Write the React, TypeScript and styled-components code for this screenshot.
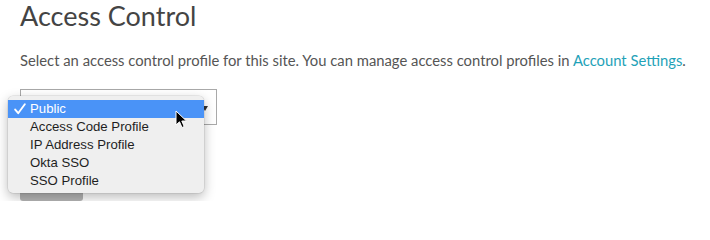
import React from "react";
import styled, { createGlobalStyle } from "styled-components";

const Global = createGlobalStyle`
  html, body { margin: 0; padding: 0; background: #fff; }
  body { font-family: Lato, "Open Sans", sans-serif; }
`;

const Page = styled.div`
  display: flex;
  flex-direction: column;
  padding: 0 20px;
  width: 710px;
  box-sizing: border-box;
`;

const Title = styled.h2`
  margin: 0;
  font-family: Lato, sans-serif;
  font-weight: 400;
  font-size: 27px;
  line-height: 32px;
  color: #444;
`;

const Intro = styled.p`
  margin: 18px 0 0;
  font-family: Lato, sans-serif;
  font-size: 14.8px;
  line-height: 20px;
  color: #555;
  white-space: nowrap;
`;

const Link = styled.a`
  color: #1fa2b8;
  text-decoration: none;
`;

const Field = styled.div`
  position: relative;
  display: flex;
  flex-direction: column;
  gap: 40px;
  margin-top: 19px;
  width: 197px;
`;

const SelectBox = styled.div`
  box-sizing: border-box;
  width: 197px;
  height: 36px;
  border: 1px solid #a9a9a9;
  background: #fff;
  display: flex;
  align-items: center;
  justify-content: flex-end;
  padding-right: 8px;
`;

const Caret = styled.span`
  width: 0;
  height: 0;
  border-left: 3px solid transparent;
  border-right: 3px solid transparent;
  border-top: 5px solid #333;
  margin-top: 2px;
`;

const SaveButton = styled.div`
  width: 63px;
  height: 36px;
  border-radius: 3px;
  background: #b5b5b5;
`;

const Menu = styled.ul`
  position: absolute;
  left: -12px;
  top: 7px;
  width: 196px;
  box-sizing: border-box;
  margin: 0;
  padding: 4px 0 3px;
  list-style: none;
  background: #efefef;
  border-radius: 5px;
  box-shadow: 0 0 0 0.5px rgba(0, 0, 0, 0.12), 0 4px 12px rgba(0, 0, 0, 0.28);
  font-family: "Liberation Sans", Arial, sans-serif;
  font-size: 13.2px;
`;

const Option = styled.li<{ $active?: boolean }>`
  position: relative;
  display: flex;
  align-items: center;
  height: 18px;
  line-height: 18px;
  padding-left: 22px;
  color: ${(p) => (p.$active ? "#fff" : "#1e1e1e")};
  background: ${(p) => (p.$active ? "#4a93f7" : "transparent")};
`;

const Check = styled.svg`
  position: absolute;
  left: 6px;
  top: 3px;
`;

const Pointer = styled.svg`
  position: absolute;
  left: 155px;
  top: 21px;
`;

const options = [
  "Public",
  "Access Code Profile",
  "IP Address Profile",
  "Okta SSO",
  "SSO Profile",
];

export default function App() {
  return (
    <Page>
      <Global />
      <Title>Access Control</Title>
      <Intro>
        Select an access control profile for this site. You can manage access
        control profiles in <Link href="#">Account Settings</Link>.
      </Intro>
      <Field>
        <SelectBox>
          <Caret />
        </SelectBox>
        <SaveButton />
        <Menu>
          {options.map((o, i) => (
            <Option key={o} $active={i === 0}>
              {i === 0 && (
                <Check width="12" height="12" viewBox="0 0 12 12">
                  <path
                    d="M1.2 6.6 L4.2 10.2 L10.8 1.2"
                    fill="none"
                    stroke="#fff"
                    strokeWidth="1.9"
                    strokeLinecap="round"
                    strokeLinejoin="round"
                  />
                </Check>
              )}
              {o}
            </Option>
          ))}
        </Menu>
        <Pointer width="13" height="19" viewBox="0 0 13 19">
          <path
            d="M1 1 L1 15 L4.5 11.8 L7 17.5 L9.2 16.5 L6.8 11 L11.5 11 Z"
            fill="#000"
            stroke="#fff"
            strokeWidth="1"
            strokeLinejoin="round"
          />
        </Pointer>
      </Field>
    </Page>
  );
}
